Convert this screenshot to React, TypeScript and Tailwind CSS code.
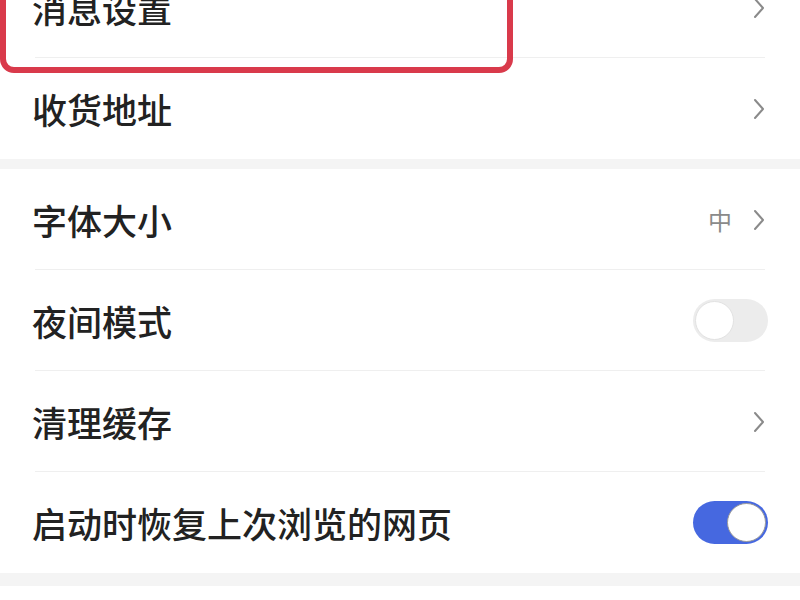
import { ReactNode } from "react";

const FONT = { fontFamily: '"Noto Sans CJK SC", "Noto Sans", sans-serif' };

function Chevron() {
  return (
    <svg width="14" height="22" viewBox="0 0 14 22" fill="none" className="text-[#8a8a8a]">
      <path d="M3 2l8 9-8 9" stroke="currentColor" strokeWidth="2" strokeLinecap="round" strokeLinejoin="round" />
    </svg>
  );
}

function Toggle({ on }: { on: boolean }) {
  return (
    <div
      className={`w-[75px] h-[43px] rounded-full flex items-center p-[2px] ${
        on ? "bg-[#4668e0] justify-end" : "bg-[#ececec] justify-start"
      }`}
    >
      <div
        className={`w-[39px] h-[39px] rounded-full bg-white border ${
          on ? "border-[#9a9a9a]" : "border-[#e2e2e2]"
        }`}
      />
    </div>
  );
}

function Row({ label, right, divider = true, pr = "pr-[34px]" }: { label: string; right: ReactNode; divider?: boolean; pr?: string }) {
  return (
    <div className={`relative h-[101px] flex items-center justify-between pl-[32px] ${pr}`}>
      <span className="text-[35px] leading-none font-medium text-[#222]">{label}</span>
      <div className="flex items-center gap-[20px]">{right}</div>
      {divider && <div className="absolute left-[35px] right-[35px] bottom-0 h-px bg-[#efefef]" />}
    </div>
  );
}

export default function App() {
  return (
    <div className="w-[800px] h-[600px] overflow-hidden bg-white" style={FONT}>
      <div className="-mt-[43px]">
        <div className="relative">
          <Row label="消息设置" right={<Chevron />} />
          {/* red highlight box */}
          <div className="absolute left-0 w-[513px] -top-[30px] bottom-[-15px] border-[6px] border-[#d93a4b] rounded-[14px]" />
        </div>
        <Row label="收货地址" right={<Chevron />} divider={false} />
        <div className="h-[10px] bg-[#f4f4f4]" />
        <Row label="字体大小" right={<><span className="text-[24px] text-[#8a8a8a]">中</span><Chevron /></>} />
        <Row label="夜间模式" right={<Toggle on={false} />} pr="pr-[32px]" />
        <Row label="清理缓存" right={<Chevron />} />
        <Row label="启动时恢复上次浏览的网页" right={<Toggle on={true} />} divider={false} pr="pr-[32px]" />
        <div className="h-[13px] bg-[#f4f4f4]" />
      </div>
    </div>
  );
}
